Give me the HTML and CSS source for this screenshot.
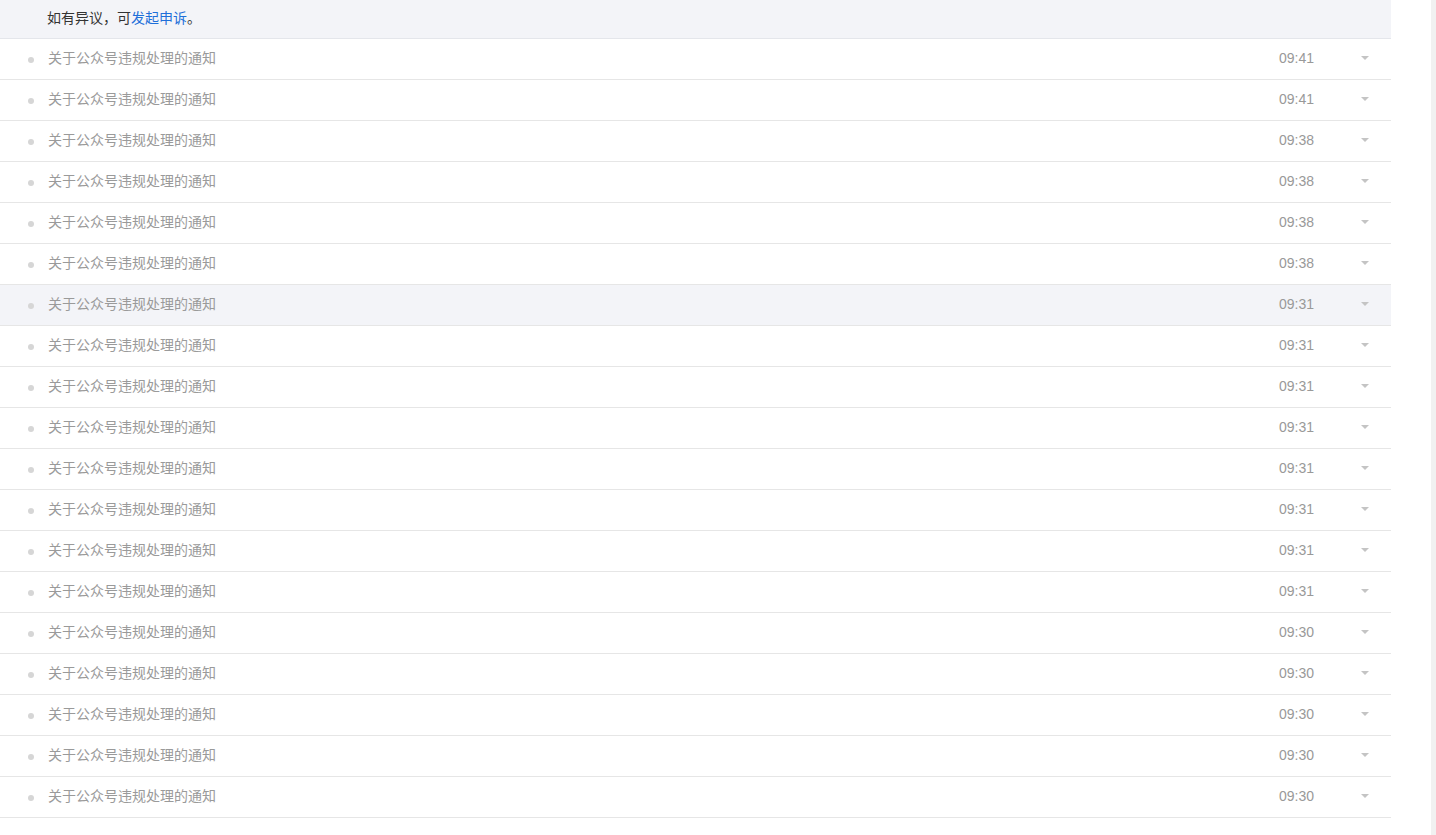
FILE: index.html
```html
<!DOCTYPE html>
<html lang="zh">
<head>
<meta charset="utf-8">
<title>通知</title>
<link rel="stylesheet" href="styles.css">
</head>
<body>
<div class="page">
  <div class="list">
    <div class="notice">如有异议，可<a class="link" href="#">发起申诉</a>。</div>
    <div class="row"><span class="dot"></span><span class="title">关于公众号违规处理的通知</span><span class="time">09:41</span><span class="caret"></span></div>
    <div class="row"><span class="dot"></span><span class="title">关于公众号违规处理的通知</span><span class="time">09:41</span><span class="caret"></span></div>
    <div class="row"><span class="dot"></span><span class="title">关于公众号违规处理的通知</span><span class="time">09:38</span><span class="caret"></span></div>
    <div class="row"><span class="dot"></span><span class="title">关于公众号违规处理的通知</span><span class="time">09:38</span><span class="caret"></span></div>
    <div class="row"><span class="dot"></span><span class="title">关于公众号违规处理的通知</span><span class="time">09:38</span><span class="caret"></span></div>
    <div class="row"><span class="dot"></span><span class="title">关于公众号违规处理的通知</span><span class="time">09:38</span><span class="caret"></span></div>
    <div class="row row-hover"><span class="dot"></span><span class="title">关于公众号违规处理的通知</span><span class="time">09:31</span><span class="caret"></span></div>
    <div class="row"><span class="dot"></span><span class="title">关于公众号违规处理的通知</span><span class="time">09:31</span><span class="caret"></span></div>
    <div class="row"><span class="dot"></span><span class="title">关于公众号违规处理的通知</span><span class="time">09:31</span><span class="caret"></span></div>
    <div class="row"><span class="dot"></span><span class="title">关于公众号违规处理的通知</span><span class="time">09:31</span><span class="caret"></span></div>
    <div class="row"><span class="dot"></span><span class="title">关于公众号违规处理的通知</span><span class="time">09:31</span><span class="caret"></span></div>
    <div class="row"><span class="dot"></span><span class="title">关于公众号违规处理的通知</span><span class="time">09:31</span><span class="caret"></span></div>
    <div class="row"><span class="dot"></span><span class="title">关于公众号违规处理的通知</span><span class="time">09:31</span><span class="caret"></span></div>
    <div class="row"><span class="dot"></span><span class="title">关于公众号违规处理的通知</span><span class="time">09:31</span><span class="caret"></span></div>
    <div class="row"><span class="dot"></span><span class="title">关于公众号违规处理的通知</span><span class="time">09:30</span><span class="caret"></span></div>
    <div class="row"><span class="dot"></span><span class="title">关于公众号违规处理的通知</span><span class="time">09:30</span><span class="caret"></span></div>
    <div class="row"><span class="dot"></span><span class="title">关于公众号违规处理的通知</span><span class="time">09:30</span><span class="caret"></span></div>
    <div class="row"><span class="dot"></span><span class="title">关于公众号违规处理的通知</span><span class="time">09:30</span><span class="caret"></span></div>
    <div class="row"><span class="dot"></span><span class="title">关于公众号违规处理的通知</span><span class="time">09:30</span><span class="caret"></span></div>
  </div>
  <div class="spacer"></div>
  <div class="track"></div>
</div>
</body>
</html>
```
FILE: styles.css
```css
html, body {
  margin: 0;
  padding: 0;
  background: #ffffff;
  overflow: hidden;
}
body {
  font-family: "Liberation Sans", "Noto Sans CJK SC", sans-serif;
  font-size: 14px;
}
.page {
  display: flex;
  height: 835px;
}
.list {
  width: 1391px;
  flex: none;
  display: flex;
  flex-direction: column;
}
.spacer {
  flex: 1;
  background: #ffffff;
}
.track {
  width: 5px;
  background: #f1f1f1;
}
.notice {
  height: 36px;
  border-bottom: 1px solid #e4e6eb;
  background: #f3f4f8;
  padding-left: 47px;
  padding-bottom: 2px;
  display: flex;
  align-items: center;
  color: #333333;
  font-size: 14px;
  line-height: 20px;
}
.link {
  color: #1e6fd9;
  text-decoration: none;
}
.row {
  height: 38px;
  border-bottom: 1px solid #e6e6e6;
  display: flex;
  align-items: center;
  padding-left: 28px;
  padding-right: 22px;
  padding-bottom: 2px;
  color: #9a9a9a;
  line-height: 20px;
}
.row-hover {
  background: #f3f4f8;
}
.dot {
  width: 6px;
  height: 6px;
  border-radius: 50%;
  background: #d6d6d6;
  margin-right: 14px;
  margin-top: 3px;
  flex: none;
}
.title {
  flex: 1;
  font-size: 14px;
}
.time {
  width: 82px;
  font-size: 14px;
  color: #999999;
}
.caret {
  width: 0;
  height: 0;
  border-left: 4px solid transparent;
  border-right: 4px solid transparent;
  border-top: 4px solid #c4c4c4;
}
```
